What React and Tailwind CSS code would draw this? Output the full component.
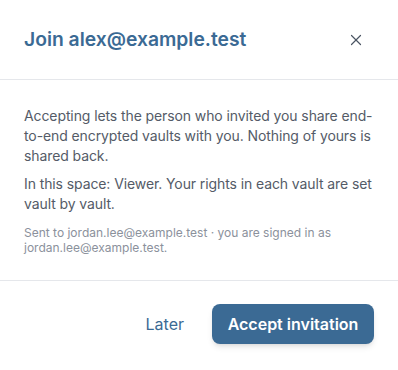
import React from 'react'
import { X } from 'lucide-react'

export default function App() {
  return (
    <div className="w-[398px] h-[370px] bg-white font-['Inter',sans-serif]">
      <div className="flex items-center justify-between px-6 h-20 border-b border-[#e5e7eb]">
        <h2 className="text-[19.3px] font-semibold text-[#3b6a94]">Join alex@example.test</h2>
        <button className="text-[#4b5563] mr-[9px]" aria-label="Close">
          <X className="w-[18px] h-[18px]" strokeWidth={1.6} />
        </button>
      </div>
      <div className="px-6 pt-[26px] pb-[25px] border-b border-[#e5e7eb]">
        <p className="text-[14px] leading-5 text-[#545b67] tracking-[-0.1px]">
          Accepting lets the person who invited you share end-to-end encrypted vaults with you. Nothing of yours is shared back.
        </p>
        <p className="mt-2 text-[14px] leading-5 text-[#545b67] tracking-[-0.1px]">
          In this space: Viewer. Your rights in each vault are set vault by vault.
        </p>
        <p className="mt-[11px] text-[12px] leading-[15px] text-[#8b919c]">
          Sent to jordan.lee@example.test · you are signed in as jordan.lee@example.test.
        </p>
      </div>
      <div className="flex items-center justify-end gap-3 px-6 pt-[23px]">
        <button className="h-10 px-4 text-[16px] font-normal text-[#3b6a94]">Later</button>
        <button className="h-10 w-[162px] rounded-lg bg-[#3b6a94] text-white text-[16px] font-semibold shadow-md">
          Accept invitation
        </button>
      </div>
    </div>
  )
}
